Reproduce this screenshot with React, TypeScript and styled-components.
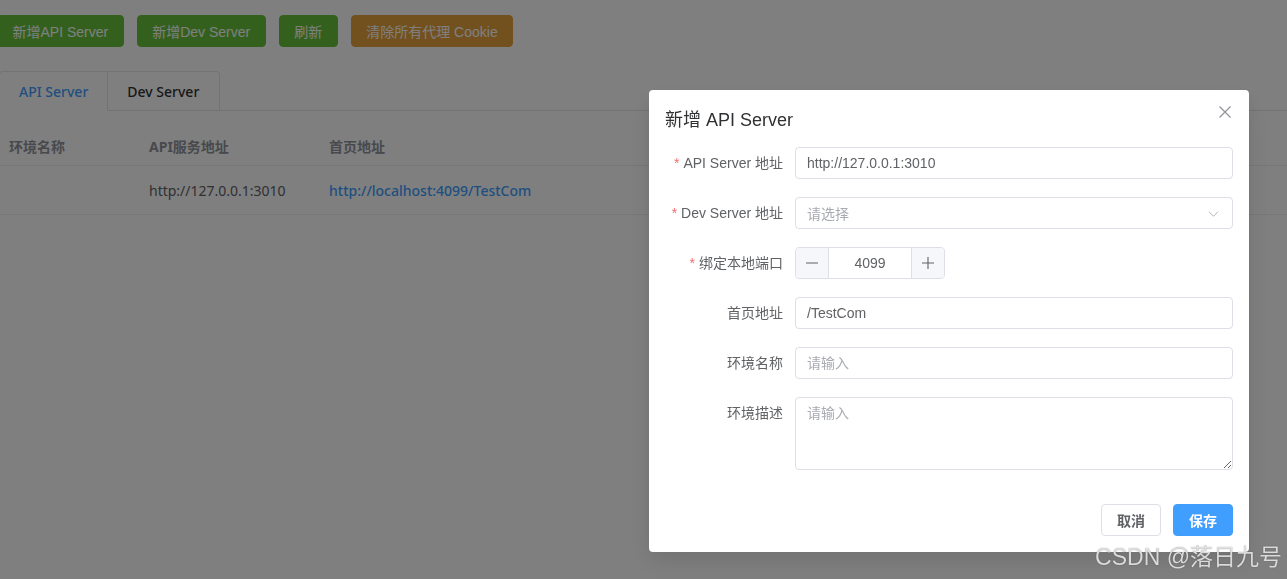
import React from 'react'
import styled, { createGlobalStyle } from 'styled-components'

const GlobalStyle = createGlobalStyle`
  html, body {
    margin: 0;
    background: #fff;
    font-family: "Noto Sans", "Noto Sans CJK SC", sans-serif;
    overflow: hidden;
  }
  * {
    box-sizing: border-box;
  }
`

const UI_FONT = `"Liberation Sans", "Noto Sans CJK SC", sans-serif`

const Page = styled.div`
  min-height: 100vh;
  padding-top: 15px;
`

const Toolbar = styled.div`
  display: flex;
  gap: 13px;
  margin-left: -3px;
`

const ActionButton = styled.button<{ $tone: 'success' | 'warning' }>`
  height: 32px;
  padding: 0 14.5px;
  border: 1px solid ${(p) => (p.$tone === 'success' ? '#67c23a' : '#e6a23c')};
  border-radius: 4px;
  background: ${(p) => (p.$tone === 'success' ? '#67c23a' : '#e6a23c')};
  color: #fff;
  font-family: ${UI_FONT};
  font-size: 14px;
  white-space: nowrap;
`

const TabNav = styled.div`
  display: flex;
  margin-top: 24px;
  border-bottom: 1px solid #e4e7ed;
`

const TabList = styled.div`
  display: flex;
  margin-bottom: -1px;
  border: 1px solid #e4e7ed;
  border-bottom: none;
  border-radius: 4px 4px 0 0;
  margin-left: -1px;
`

const TabItem = styled.div<{ $active?: boolean }>`
  height: 39px;
  line-height: 39px;
  padding: 0 19px;
  font-size: 14px;
  font-weight: 500;
  color: ${(p) => (p.$active ? '#409eff' : '#303133')};
  border-bottom: 1px solid ${(p) => (p.$active ? '#fff' : '#e4e7ed')};

  & + & {
    border-left: 1px solid #e4e7ed;
    padding-right: 20px;
  }
`

const Table = styled.div`
  margin-top: 15px;
`

const TableRow = styled.div<{ $head?: boolean }>`
  display: grid;
  grid-template-columns: 140px 180px 1fr;
  align-items: center;
  height: ${(p) => (p.$head ? '40px' : '49px')};
  border-bottom: 1px solid #ebeef5;
  font-size: 14px;
  font-weight: ${(p) => (p.$head ? 700 : 400)};
  color: ${(p) => (p.$head ? '#909399' : '#606266')};
`

const Cell = styled.div`
  padding: 0 9px;
  white-space: nowrap;
`

const LinkText = styled.a`
  color: #409eff;
  font-weight: 500;
  text-decoration: none;
`

const Overlay = styled.div`
  position: fixed;
  inset: 0;
  background: rgba(0, 0, 0, 0.5);
`

const Dialog = styled.div`
  position: fixed;
  top: 90px;
  left: 649px;
  width: 600px;
  background: #fff;
  border-radius: 4px;
  box-shadow: 0 12px 32px 4px rgba(0, 0, 0, 0.04), 0 8px 20px rgba(0, 0, 0, 0.08);
  font-family: ${UI_FONT};
`

const DialogHeader = styled.div`
  padding: 17px 16px 13px;
  line-height: 26px;
`

const DialogTitle = styled.span`
  font-size: 18px;
  color: #303133;
`

const CloseButton = styled.button`
  position: absolute;
  top: 15px;
  right: 17px;
  width: 14px;
  height: 14px;
  padding: 0;
  border: none;
  background: none;
  color: #909399;
  display: flex;
`

const DialogBody = styled.div`
  padding: 0 16px;
`

const FormRow = styled.div`
  display: flex;
  margin-bottom: 18px;
`

const FormLabel = styled.label`
  flex: 0 0 130px;
  padding-right: 12px;
  text-align: right;
  line-height: 32px;
  font-size: 14px;
  color: #606266;
  white-space: nowrap;
`

const Star = styled.span`
  color: #f56c6c;
  margin-right: 4px;
`

const TextInput = styled.input`
  flex: 1;
  min-width: 0;
  height: 32px;
  padding: 0 11px;
  border: 1px solid #dcdfe6;
  border-radius: 4px;
  font-family: ${UI_FONT};
  font-size: 14px;
  color: #606266;
  outline: none;

  &::placeholder {
    color: #a8abb2;
  }
`

const SelectBox = styled.div`
  flex: 1;
  display: flex;
  align-items: center;
  justify-content: space-between;
  height: 32px;
  padding: 0 13px 0 11px;
  border: 1px solid #dcdfe6;
  border-radius: 4px;
  font-size: 14px;
  color: #a8abb2;
`

const NumberBox = styled.div`
  display: flex;
  width: 150px;
  height: 32px;
  border: 1px solid #dcdfe6;
  border-radius: 4px;
  overflow: hidden;
`

const StepButton = styled.span<{ $side: 'left' | 'right' }>`
  flex: 0 0 33px;
  display: flex;
  align-items: center;
  justify-content: center;
  background: #f5f7fa;
  color: #606266;
  border-${(p) => (p.$side === 'left' ? 'right' : 'left')}: 1px solid #dcdfe6;
`

const NumberValue = styled.span`
  flex: 1;
  text-align: center;
  line-height: 30px;
  font-size: 14px;
  color: #606266;
`

const TextArea = styled.textarea`
  flex: 1;
  height: 73px;
  padding: 5px 11px;
  border: 1px solid #dcdfe6;
  border-radius: 4px;
  font-family: ${UI_FONT};
  font-size: 14px;
  line-height: 1.5;
  color: #606266;
  resize: vertical;
  outline: none;

  &::placeholder {
    color: #a8abb2;
  }
`

const DialogFooter = styled.div`
  display: flex;
  justify-content: flex-end;
  gap: 12px;
  padding: 16px;
`

const FooterButton = styled.button<{ $primary?: boolean }>`
  height: 32px;
  padding: 0 15px;
  border-radius: 4px;
  border: 1px solid ${(p) => (p.$primary ? '#409eff' : '#dcdfe6')};
  background: ${(p) => (p.$primary ? '#409eff' : '#fff')};
  color: ${(p) => (p.$primary ? '#fff' : '#606266')};
  font-family: ${UI_FONT};
  font-size: 14px;
  font-weight: 600;
`

const Watermark = styled.div`
  position: fixed;
  right: 5px;
  bottom: 7px;
  font-family: "Liberation Sans", "Noto Sans CJK SC", sans-serif;
  font-size: 23px;
  color: rgba(235, 235, 235, 0.9);
  text-shadow: 0 0 1px rgba(0, 0, 0, 0.55);
  pointer-events: none;
`

const Chevron = () => (
  <svg width="11" height="11" viewBox="0 0 12 12" fill="none" stroke="currentColor" strokeWidth="1">
    <path d="M1 4l5 5 5-5" />
  </svg>
)

const Minus = () => (
  <svg width="12" height="12" viewBox="0 0 12 12" stroke="currentColor" strokeWidth="1.1">
    <path d="M0 6h12" />
  </svg>
)

const Plus = () => (
  <svg width="12" height="12" viewBox="0 0 12 12" stroke="currentColor" strokeWidth="1.1">
    <path d="M0 6h12M6 0v12" />
  </svg>
)

const CloseIcon = () => (
  <svg width="14" height="14" viewBox="0 0 14 14" stroke="currentColor" strokeWidth="1.2">
    <path d="M1.5 1.5l11 11M12.5 1.5l-11 11" />
  </svg>
)

export default function App() {
  return (
    <>
      <GlobalStyle />
      <Page>
        <Toolbar>
          <ActionButton $tone="success">新增API Server</ActionButton>
          <ActionButton $tone="success">新增Dev Server</ActionButton>
          <ActionButton $tone="success">刷新</ActionButton>
          <ActionButton $tone="warning">清除所有代理 Cookie</ActionButton>
        </Toolbar>

        <TabNav>
          <TabList>
            <TabItem $active>API Server</TabItem>
            <TabItem>Dev Server</TabItem>
          </TabList>
        </TabNav>

        <Table>
          <TableRow $head>
            <Cell>环境名称</Cell>
            <Cell>API服务地址</Cell>
            <Cell>首页地址</Cell>
          </TableRow>
          <TableRow>
            <Cell />
            <Cell>http://127.0.0.1:3010</Cell>
            <Cell>
              <LinkText>http://localhost:4099/TestCom</LinkText>
            </Cell>
          </TableRow>
        </Table>
      </Page>

      <Overlay />

      <Dialog>
        <DialogHeader>
          <DialogTitle>新增 API Server</DialogTitle>
          <CloseButton aria-label="关闭">
            <CloseIcon />
          </CloseButton>
        </DialogHeader>
        <DialogBody>
          <FormRow>
            <FormLabel>
              <Star>*</Star>API Server 地址
            </FormLabel>
            <TextInput defaultValue="http://127.0.0.1:3010" />
          </FormRow>
          <FormRow>
            <FormLabel>
              <Star>*</Star>Dev Server 地址
            </FormLabel>
            <SelectBox>
              <span>请选择</span>
              <Chevron />
            </SelectBox>
          </FormRow>
          <FormRow>
            <FormLabel>
              <Star>*</Star>绑定本地端口
            </FormLabel>
            <NumberBox>
              <StepButton $side="left">
                <Minus />
              </StepButton>
              <NumberValue>4099</NumberValue>
              <StepButton $side="right">
                <Plus />
              </StepButton>
            </NumberBox>
          </FormRow>
          <FormRow>
            <FormLabel>首页地址</FormLabel>
            <TextInput defaultValue="/TestCom" />
          </FormRow>
          <FormRow>
            <FormLabel>环境名称</FormLabel>
            <TextInput placeholder="请输入" />
          </FormRow>
          <FormRow>
            <FormLabel>环境描述</FormLabel>
            <TextArea placeholder="请输入" />
          </FormRow>
        </DialogBody>
        <DialogFooter>
          <FooterButton>取消</FooterButton>
          <FooterButton $primary>保存</FooterButton>
        </DialogFooter>
      </Dialog>

      <Watermark>CSDN @落日九号</Watermark>
    </>
  )
}
